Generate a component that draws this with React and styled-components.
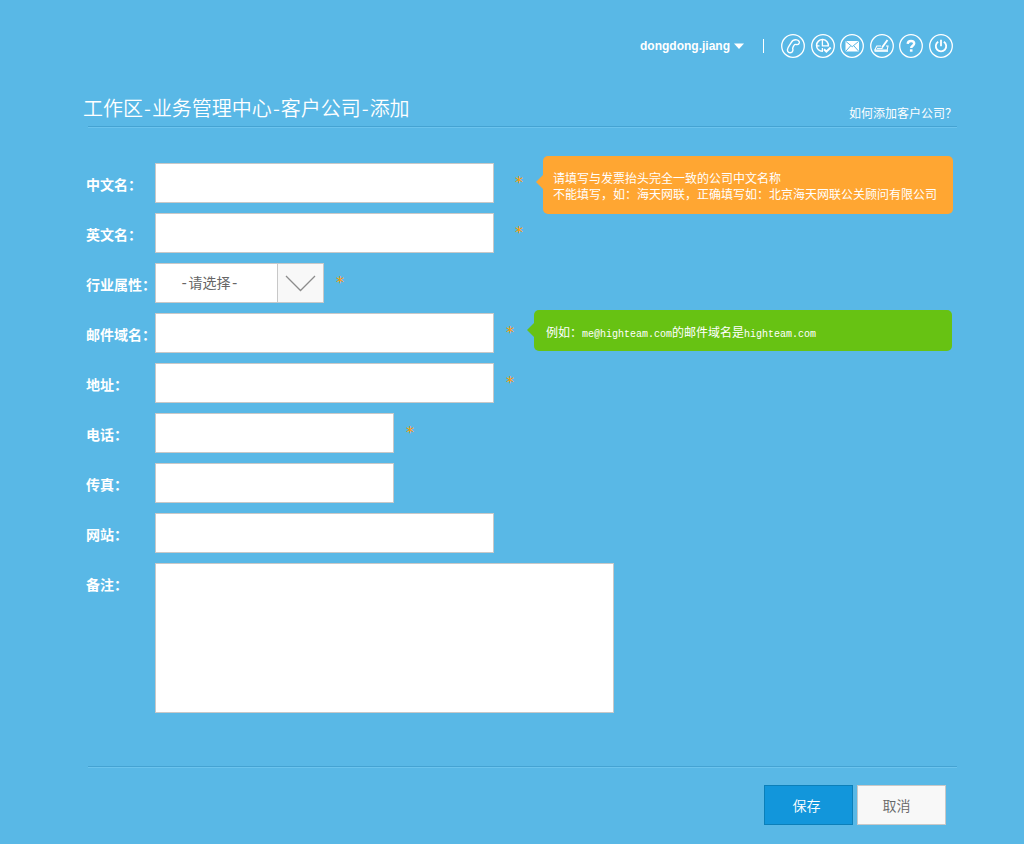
import React from 'react';
import styled, { createGlobalStyle } from 'styled-components';

const GlobalStyle = createGlobalStyle`
  * {
    box-sizing: border-box;
  }
  body {
    margin: 0;
    background-color: #59b8e6;
    color: #fff;
    font-family: 'Noto Sans CJK SC', sans-serif;
    font-size: 12px;
  }
  button, input, select, textarea {
    font-family: inherit;
    border-radius: 0;
  }
`;

const Page = styled.div`
  padding: 34px 67px 19px 83px;
`;

const TopBar = styled.header`
  display: flex;
  align-items: center;
  justify-content: flex-end;
  height: 24px;
  padding-right: 4px;
`;

const UserButton = styled.button`
  display: flex;
  align-items: center;
  gap: 4px;
  padding: 0;
  border: 0;
  background: none;
  color: #fff;
  font-family: 'Liberation Sans', sans-serif;
  font-size: 12px;
  font-weight: bold;
`;

const Separator = styled.span`
  width: 1px;
  height: 14px;
  margin: 0 17px 0 19px;
  background-color: #fff;
`;

const Tools = styled.nav`
  display: flex;
  justify-content: space-between;
  width: 172px;
`;

const ToolLink = styled.a`
  display: block;
  width: 24px;
  height: 24px;
  color: #fff;

  svg {
    display: block;
  }
`;

const TitleBar = styled.div`
  display: flex;
  justify-content: space-between;
  align-items: flex-end;
  height: 32px;
  margin-top: 36px;
`;

const Title = styled.h1`
  margin: 0;
  font-size: 20px;
  font-weight: 350;
  line-height: 36px;
`;

const Dash = styled.span`
  margin: 0 1px;
`;

const HelpLink = styled.a`
  color: #fff;
  font-size: 12px;
  line-height: 26px;
  text-decoration: none;
`;

const Rule = styled.hr`
  height: 2px;
  margin: 0 0 0 5px;
  border: 0;
  border-top: 1px solid #45a3d2;
  border-bottom: 1px solid #6cc4ee;
`;

const Form = styled.form`
  display: flex;
  flex-direction: column;
  gap: 10px;
  margin-top: 35px;
`;

const Row = styled.div`
  display: flex;
  align-items: flex-start;
  min-height: 40px;
`;

const Label = styled.label`
  flex: none;
  width: 72px;
  height: 40px;
  padding-left: 3px;
  font-size: 14px;
  font-weight: bold;
  line-height: 42px;
  white-space: nowrap;
`;

const TextInput = styled.input`
  flex: none;
  width: ${props => (props.$short ? '239px' : '339px')};
  height: 40px;
  padding: 0 10px;
  border: 1px solid #c8c8c8;
  background-color: #fff;
  color: #666;
  font-size: 14px;
`;

const Remark = styled.textarea`
  width: 459px;
  height: 150px;
  padding: 10px;
  border: 1px solid #c8c8c8;
  background-color: #fff;
  color: #666;
  font-size: 14px;
  resize: none;
`;

const SelectBox = styled.div`
  position: relative;
  width: 169px;
  height: 40px;
`;

const Select = styled.select`
  appearance: none;
  width: 100%;
  height: 40px;
  padding: 2px 46px 0 24px;
  border: 1px solid #c8c8c8;
  background-color: #fff;
  color: #666;
  font-family: 'Liberation Mono', 'Noto Sans CJK SC', monospace;
  font-size: 14px;
`;

const SelectArrow = styled.span`
  position: absolute;
  top: 1px;
  right: 1px;
  bottom: 1px;
  width: 46px;
  border-left: 1px solid #c8c8c8;
  background-color: #f8f8f8;
  pointer-events: none;

  svg {
    display: block;
  }
`;

const Star = styled.span`
  flex: none;
  width: 8px;
  height: 40px;
  margin-left: ${props => (props.$wide ? '21px' : '12px')};
  color: #ff9c00;
  font-family: 'DejaVu Sans', sans-serif;
  font-size: 16px;
  line-height: 40px;
  text-align: center;
`;

const Tip = styled.div`
  position: relative;
  flex: 1;
  border-radius: 5px;
  background-color: ${props => props.$color};
  font-size: 12px;
  line-height: 16px;

  &::before {
    content: '';
    position: absolute;
    left: -7px;
    border: 7px solid transparent;
    border-left-width: 0;
    border-right-color: ${props => props.$color};
  }
`;

const WarningTip = styled(Tip)`
  margin: -7px 4px -11px 20px;
  padding: 14px 0 12px 10px;

  &::before {
    top: 19px;
  }
`;

const ExampleTip = styled(Tip)`
  margin: -3px 5px 0 20px;
  padding: 14px 0 11px 12px;

  &::before {
    top: 13px;
  }
`;

const Code = styled.span`
  font-family: 'Liberation Mono', monospace;
  font-size: 10px;
  line-height: 10px;
`;

const Footer = styled.footer`
  margin-top: 53px;
`;

const Actions = styled.div`
  display: flex;
  justify-content: flex-end;
  gap: 4px;
  padding: 17px 11px 0 0;
`;

const Button = styled.button`
  width: 89px;
  height: 40px;
  padding: 0 16px 0 6px;
  border: 1px solid #c8c8c8;
  background-color: #f8f8f8;
  color: #666;
  font-size: 14px;
  font-weight: 350;
`;

const PrimaryButton = styled(Button)`
  padding: 0 12px 0 8px;
  border-color: #0b7fb9;
  background-color: #1296db;
  color: #fff;
`;

const ToolIcon = ({ children }) => (
  <svg width="24" height="24" viewBox="0 0 24 24" fill="none" stroke="currentColor" strokeWidth="1.3">
    <circle cx="12" cy="12" r="11.3" />
    {children}
  </svg>
);

const tools = [
  {
    label: '电话',
    icon: (
      <path
        d="M10.2 8.600C11.400 6.500 13.600 5.600 15.700 5.900c1.800.3 2.900 1.600 2.600 3-.3 1.200-1.500 1.900-2.900 1.600-1.100-.3-1.900 0-2.500 1-.6 1-1.100 1.700-1.200 2.700-.1.800.4 1.200.2 2.100-.3 1.400-1.600 2.600-3.100 2.500-1.700-.1-2.600-1.700-2.300-3.400.4-2.300 2.300-4.300 3.700-6.800z"
        strokeWidth="1.400"
        strokeLinejoin="round"
      />
    ),
  },
  {
    label: '日程',
    icon: (
      <>
        <path d="M17.300 12.300a5.900 5.900 0 1 0-5.400 5" strokeWidth="1.500" />
        <path d="M11.400 6v5.800h6M6 11.800h2.500M11.400 14v3" />
        <path d="M13 15.200l2.400 2.400 4.300-4" strokeWidth="2" />
      </>
    ),
  },
  {
    label: '邮件',
    icon: (
      <>
        <rect x="5.500" y="7" width="13.500" height="10.500" rx=".8" fill="currentColor" stroke="none" />
        <path d="M6 7.500l6.200 5.200 6.300-5.200M6 17l4.500-5M18.500 17l-4.500-5" stroke="#59b8e6" strokeWidth="1" />
      </>
    ),
  },
  {
    label: '签名',
    icon: (
      <>
        <path d="M11 12H6.800L4.800 16h12.400l.8-4h-2" strokeWidth="1.100" />
        <path d="M4.500 17h13.500" strokeWidth="1.600" />
        <path d="M7 14.400h4" strokeWidth="1" />
        <path d="M12.200 13.200l5.300-7.200" strokeWidth="1.900" />
        <path d="M11 14.800l2-1.200" />
      </>
    ),
  },
  {
    label: '帮助',
    icon: (
      <>
        <path d="M8.700 9.900c.1-1.900 1.400-2.900 3.300-2.900s3.200 1 3.200 2.600c0 2-3 2.200-3 4.300" strokeWidth="2.400" />
        <path d="M12.200 15.300v2.400" strokeWidth="2.600" />
      </>
    ),
  },
  {
    label: '退出',
    icon: (
      <>
        <path d="M9.200 7.800a5.200 5.200 0 1 0 5.600 0" strokeWidth="1.800" />
        <path d="M12 5.800v6.400" strokeWidth="1.800" />
      </>
    ),
  },
];

const App = () => (
  <Page>
    <GlobalStyle />
    <TopBar>
      <UserButton type="button">
        dongdong.jiang
        <svg width="10" height="6" viewBox="0 0 10 6" fill="currentColor">
          <path d="M0 .5h10L5 6z" />
        </svg>
      </UserButton>
      <Separator />
      <Tools>
        {tools.map(tool => (
          <ToolLink key={tool.label} href="#" aria-label={tool.label}>
            <ToolIcon>{tool.icon}</ToolIcon>
          </ToolLink>
        ))}
      </Tools>
    </TopBar>

    <TitleBar>
      <Title>
        工作区<Dash>-</Dash>业务管理中心<Dash>-</Dash>客户公司<Dash>-</Dash>添加
      </Title>
      <HelpLink href="#">如何添加客户公司？</HelpLink>
    </TitleBar>
    <Rule />

    <Form id="company">
      <Row>
        <Label htmlFor="nameCn">中文名：</Label>
        <TextInput id="nameCn" type="text" />
        <Star $wide>*</Star>
        <WarningTip $color="#ffa632">
          请填写与发票抬头完全一致的公司中文名称
          <br />
          不能填写，如：海天网联，正确填写如：北京海天网联公关顾问有限公司
        </WarningTip>
      </Row>
      <Row>
        <Label htmlFor="nameEn">英文名：</Label>
        <TextInput id="nameEn" type="text" />
        <Star $wide>*</Star>
      </Row>
      <Row>
        <Label htmlFor="industry">行业属性：</Label>
        <SelectBox>
          <Select id="industry">
            <option>-请选择-</option>
          </Select>
          <SelectArrow>
            <svg width="45" height="38" viewBox="0 0 45 38" fill="none" stroke="#8c8c8c" strokeWidth="1.300">
              <path d="M8 12l14.500 14.500L37 12" />
            </svg>
          </SelectArrow>
        </SelectBox>
        <Star>*</Star>
      </Row>
      <Row>
        <Label htmlFor="domain">邮件域名：</Label>
        <TextInput id="domain" type="text" />
        <Star>*</Star>
        <ExampleTip $color="#67c213">
          例如：<Code>me@highteam.com</Code>的邮件域名是<Code>highteam.com</Code>
        </ExampleTip>
      </Row>
      <Row>
        <Label htmlFor="address">地址：</Label>
        <TextInput id="address" type="text" />
        <Star>*</Star>
      </Row>
      <Row>
        <Label htmlFor="phone">电话：</Label>
        <TextInput id="phone" type="tel" $short />
        <Star>*</Star>
      </Row>
      <Row>
        <Label htmlFor="fax">传真：</Label>
        <TextInput id="fax" type="tel" $short />
      </Row>
      <Row>
        <Label htmlFor="website">网站：</Label>
        <TextInput id="website" type="text" />
      </Row>
      <Row>
        <Label htmlFor="remark">备注：</Label>
        <Remark id="remark" />
      </Row>
    </Form>

    <Footer>
      <Rule />
      <Actions>
        <PrimaryButton type="submit" form="company">保存</PrimaryButton>
        <Button type="button">取消</Button>
      </Actions>
    </Footer>
  </Page>
);

export default App;
